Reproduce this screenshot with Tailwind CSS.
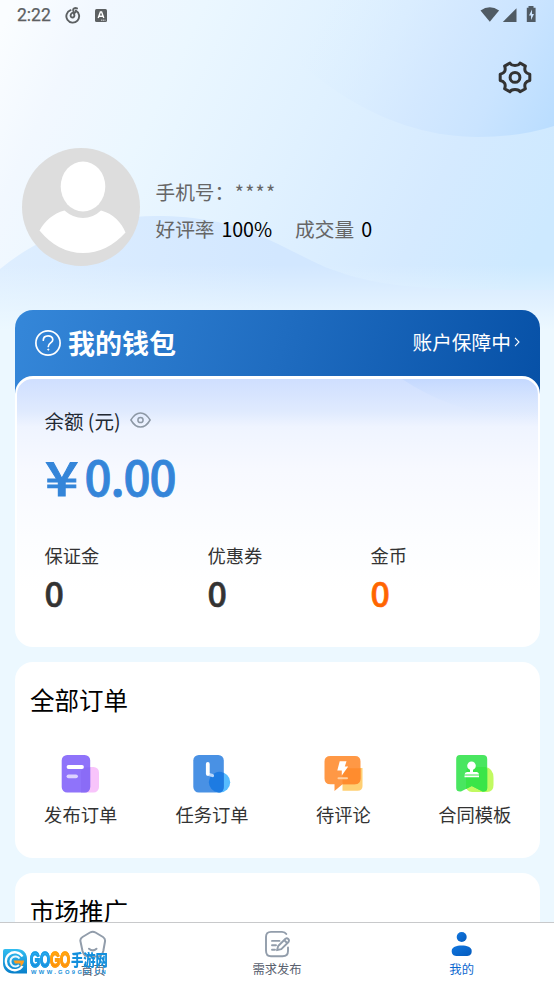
<!DOCTYPE html>
<html lang="zh-CN">
<head>
<meta charset="utf-8">
<meta name="viewport" content="width=device-width, initial-scale=1">
<title>我的</title>
<script src="https://cdn.jsdelivr.net/npm/@tailwindcss/browser@4"></script>
</head>
<body class="bg-[#ecf7ff]">
<div class="relative flex h-[984px] w-[554px] flex-col overflow-hidden bg-[#ecf8ff] font-['Noto_Sans_CJK_SC',sans-serif] text-black">
  <!-- header backdrop -->
  <svg class="absolute left-0 top-0" width="554" height="330" viewBox="0 0 554 330">
    <defs>
      <linearGradient id="sky" gradientUnits="userSpaceOnUse" x1="0" y1="30" x2="520" y2="280">
        <stop offset="0" stop-color="#fafdff"/><stop offset=".13" stop-color="#f2f8ff"/><stop offset=".3" stop-color="#ebf7ff"/><stop offset=".55" stop-color="#e0f1ff"/><stop offset=".8" stop-color="#d5eaff"/><stop offset="1" stop-color="#cde9ff"/>
      </linearGradient>
      <linearGradient id="arc" gradientUnits="userSpaceOnUse" x1="320" y1="20" x2="560" y2="140">
        <stop offset="0" stop-color="#def0ff" stop-opacity="0"/><stop offset=".45" stop-color="#d3e8ff" stop-opacity=".9"/><stop offset=".7" stop-color="#cae4ff"/><stop offset="1" stop-color="#b7dcff"/>
      </linearGradient>
      <linearGradient id="wave" x1="0" y1="0" x2="1" y2="0">
        <stop offset="0" stop-color="#deeeff"/><stop offset=".5" stop-color="#d2e7ff"/><stop offset="1" stop-color="#d2e7ff"/>
      </linearGradient>
      <linearGradient id="fade" x1="0" y1="0" x2="0" y2="1">
        <stop offset="0" stop-color="#ecf8ff" stop-opacity="0"/><stop offset="1" stop-color="#ecf8ff"/>
      </linearGradient>
    </defs>
    <rect width="554" height="330" fill="url(#sky)"/>
    <path d="M240 0C300 75 380 137 478 137Q520 137 554 126V0Z" fill="url(#arc)"/>
    <path d="M0 269C40 236 90 217 155 216C240 216 270 242 325 267C380 288 420 290 554 290V330H0Z" fill="url(#wave)"/>
    <rect y="265" width="554" height="65" fill="url(#fade)"/>
  </svg>

  <!-- status bar -->
  <div class="relative flex h-[30px] shrink-0 items-center pl-[17px] pr-[17px] text-[#5c6062]">
    <span class="w-[48px] font-[Roboto,sans-serif] text-[17.5px] leading-[30px] [-webkit-text-stroke:.25px_#5c6062]">2:22</span>
    <svg width="16" height="17" viewBox="0 0 16 17" fill="none" stroke="currentColor" stroke-width="1.9" stroke-linecap="round"><path d="M5.6 3.2A6.4 6.4 0 1 0 10.800 3.600M12 1.400C9.800 .4 7.900 1.500 8.200 3.200L9.400 8.500A1.900 1.900 0 1 1 5.600 8.700C5.500 6.300 8 5 10.300 5.500"/></svg>
    <svg class="ml-[13.500px]" width="12" height="13" viewBox="0 0 12 13"><rect width="12" height="13" rx="1.5" fill="currentColor"/><path d="M3.200 9L5.400 3H6.600L8.800 9M4.200 7.200H7.800" fill="none" stroke="#fff" stroke-width="1.400"/><path d="M6 11.200H10.500" stroke="#fff" stroke-width=".8" stroke-dasharray="1.500 .5"/></svg>
    <div class="flex-1"></div>
    <svg width="57" height="18" viewBox="0 0 57 18" fill="#505b64"><path d="M.5 4.500Q9.800-2 19.100 4.500L9.800 15.800Z"/><path d="M22.800 16H36.500V2.200Z"/><path fill-rule="evenodd" d="M48.500 0H53.500V1.800H55.600V16H46.800V1.800H48.500ZM52 3.500L49 9.500H51V14L54 8H52Z"/></svg>
  </div>

  <div class="relative flex h-[118px] shrink-0 justify-end pr-[22.500px] pt-[30px]">
    <svg width="34" height="35" viewBox="0 0 34 35" fill="none" stroke="#333" stroke-width="3" stroke-linejoin="round"><path d="M11.900 3Q13 5.400 17 5.400T22.100 3L27.400 6.100C25.800 10.500 27.500 13.500 31.800 14.200V20.600C27.500 21.300 25.800 24.300 27.400 28.700L22.100 31.800Q21 29.400 17 29.400T11.900 31.800L6.600 28.700C8.200 24.300 6.500 21.300 2.200 20.600V14.200C6.500 13.500 8.200 10.500 6.600 6.100Z"/><circle cx="17" cy="17.400" r="4.900"/></svg>
  </div>

  <!-- profile -->
  <div class="relative flex h-[162px] shrink-0 pl-[22px]">
    <svg width="118" height="118" viewBox="0 0 118 118"><circle cx="59" cy="59" r="59" fill="#ddd"/><ellipse cx="61" cy="38.500" rx="22.300" ry="25" fill="#fff"/><path d="M42.500 62.500Q51 70 61 70Q71 70 79 62.500C91 65.500 100 75 103.500 84.500Q85 105 61 105Q36 105 17.500 82.500C23 73 31 65.500 42.500 62.500Z" fill="#fff"/></svg>
    <div class="ml-[15.500px] flex flex-col pt-[25px] text-[19.700px] leading-[37px] text-[#666]">
      <div>手机号：<span class="ml-[.5px] tracking-[1.200px]">****</span></div>
      <div class="flex"><span>好评率</span><span class="ml-[7px] w-[73.500px] tracking-[-0.150px] text-black">100%</span><span>成交量</span><span class="ml-[7px] text-black">0</span></div>
    </div>
  </div>

  <!-- wallet -->
  <section class="relative mx-[15px] h-[337px] w-[525.400px] shrink-0">
    <div class="flex h-[110px] justify-between rounded-t-[18px] bg-[linear-gradient(105deg,#3587d9,#1f6cc0_50%,#0650a6)] pl-5 pr-[20.500px] text-white">
      <div class="flex h-[65px] items-center gap-[7px]">
        <svg width="26" height="26" viewBox="0 0 26 26" fill="none" stroke="#fff" stroke-width="1.700"><circle cx="13" cy="13" r="12.100"/><path d="M8.300 10.200C8.300 4.500 17.800 4.500 17.800 9.700C17.800 12.800 13.300 13 13.300 16.400" stroke-linecap="round"/><circle cx="13.300" cy="19.600" r=".6" fill="#fff" stroke-width="1"/></svg>
        <h2 class="text-[27px] font-bold leading-[40px]">我的钱包</h2>
      </div>
      <div class="flex h-[64px] items-center gap-[3px] text-[19.700px]"><span>账户保障中</span><svg width="6" height="10" viewBox="0 0 6 10" fill="none" stroke="#fff" stroke-width="1.100"><path d="M1 .8L5 5L1 9.200"/></svg></div>
    </div>
    <div class="relative -mt-[44px] h-[271px] overflow-hidden rounded-[18px] border-2 border-t-3 border-white bg-[linear-gradient(180deg,#cfdfff,#dfeafe_12%,#eff4ff_18%,#f7f9ff_34%,#fcfdff_60%,#fff_80%)] pl-[27.500px]">
      <svg class="absolute left-0 top-0" width="520" height="45" viewBox="0 0 520 45"><defs><linearGradient id="glow" x1="0" y1="0" x2="0" y2="1"><stop stop-color="#b8d2ff" stop-opacity=".5"/><stop offset="1" stop-color="#e5efff" stop-opacity="0"/></linearGradient></defs><path d="M385 0Q440 37 520 43V0Z" fill="url(#glow)"/></svg>
      <div class="relative flex h-[83px] items-center text-[19.500px] text-[#222933]"><span>余额 (元)</span><svg class="-mt-px ml-[9.500px]" width="21" height="16" viewBox="0 0 21 16" fill="none" stroke="#8d98a5" stroke-width="1.500"><path d="M.9 8Q5 .9 10.500 .9T20.100 8Q16 15.100 10.500 15.100T.9 8Z"/><circle cx="10.500" cy="8" r="2.600"/></svg></div>
      <div class="relative flex h-[30px] items-center text-[47.500px] font-medium leading-none text-[#3485d9] [-webkit-text-stroke:.9px_#3485d9]"><span class="-mt-[3px] w-[40px]"><span class="inline-block origin-left scale-x-[1.240]">¥</span></span><span class="-mt-[3px] tracking-[-1.100px]">0.00</span></div>
      <div class="relative mt-[45px] grid grid-cols-[163px_163px_1fr] text-[18.300px] leading-[36px] text-[#333]">
        <div><div>保证金</div><div class="text-[34px] font-medium leading-[40px] [-webkit-text-stroke:.6px_#333]">0</div></div>
        <div><div>优惠券</div><div class="text-[34px] font-medium leading-[40px] [-webkit-text-stroke:.6px_#333]">0</div></div>
        <div><div>金币</div><div class="text-[34px] font-medium leading-[40px] text-[#ff6500] [-webkit-text-stroke:.6px_#ff6500]">0</div></div>
      </div>
    </div>
  </section>

  <!-- orders -->
  <section class="relative mx-[15px] mt-[15px] h-[196px] w-[525.400px] shrink-0 rounded-[18px] bg-white pt-[19px]">
    <h2 class="pl-[15px] text-[24.500px] leading-[38px]">全部订单</h2>
    <div class="mt-[34px] grid grid-cols-4 text-center text-[18.300px] leading-[39px] text-[#333]">
      <div class="flex flex-col items-center">
        <svg class="-translate-x-[.5px]" width="42" height="42" viewBox="0 0 42 42"><rect x="22" y="14" width="17.500" height="25.500" rx="5.500" fill="#f8c4fb"/><rect x="2.200" y="2" width="28.500" height="37.500" rx="5.500" fill="#8f73fa"/><path d="M21.500 39.500V20Q21.500 14.500 27 14.500H30.700V34Q30.700 39.500 25 39.500Z" fill="#8768f5" opacity=".65"/><path d="M9 14H22.500" stroke="#fff" stroke-width="3.800" stroke-linecap="round"/><path d="M9 23.300H16.500" stroke="#ddd3ff" stroke-width="3.800" stroke-linecap="round"/></svg>
        <span>发布订单</span>
      </div>
      <div class="flex flex-col items-center">
        <svg width="42" height="42" viewBox="0 0 42 42"><circle cx="29" cy="29.300" r="10.200" fill="#57bcff"/><rect x="2.300" y="2" width="30.500" height="37.500" rx="5.500" fill="#4991e4"/><path d="M32.800 19.900A10.200 10.200 0 0 0 23.700 38.500L28 39.500Q32.800 39.500 32.800 33.500Z" fill="#1d7be2"/><path d="M17 21.300L21.500 22.500" stroke="#b7d5fa" stroke-width="3.200" stroke-linecap="round"/><path d="M16.800 11V20.800" stroke="#fff" stroke-width="3.800" stroke-linecap="round"/></svg>
        <span>任务订单</span>
      </div>
      <div class="flex flex-col items-center">
        <svg class="translate-x-[.5px]" width="42" height="42" viewBox="0 0 42 42"><path d="M20 15H40V33Q40 37.800 35 37.800H20Z" fill="#ffcf73"/><path d="M8 3H32.500Q38 3 38 8.500V25.500Q38 31.300 32 31.300H20L12 38V31.300H8Q2 31.300 2 25.500V8.500Q2 3 8 3Z" fill="#ff9845"/><path d="M20 15.200H38V25.500Q38 31.300 32 31.300H20Z" fill="#ff8c2e"/><path d="M17.200 8.300H24L22.300 13.600H25.700L19.300 22.500V17.600H14.800Z" fill="#fff"/><path d="M16 25.300H24.500" stroke="#ffd0a0" stroke-width="2" stroke-linecap="round"/></svg>
        <span>待评论</span>
      </div>
      <div class="flex flex-col items-center">
        <svg width="42" height="42" viewBox="0 0 42 42"><path d="M17 14H31Q39.500 15 39.500 25V32Q39.500 39 33 39H18Q12 39 12 32V20Q12 14 17 14Z" fill="#c1fa61"/><path d="M6 2H29Q33.200 2 33.200 6V35Q33.200 39 28.500 38.500L17.800 33L7 38.500Q2.200 39 2.200 35V6Q2.200 2 6 2Z" fill="#49e660"/><path d="M12 35.900V20Q12 14 17 14H32L33.200 16V35Q33.200 39 28.500 38.500L17.800 33Z" fill="#3ae548"/><circle cx="17.500" cy="12.700" r="4.300" fill="#fff"/><path d="M16 16H19V19H23Q25 19.500 25 21.500H10.500Q11 19 13 19H16ZM10.500 22.500H25V24.200H10.500Z" fill="#fff"/></svg>
        <span>合同模板</span>
      </div>
    </div>
  </section>

  <section class="relative mx-[15px] mt-[15px] h-[120px] w-[525.400px] shrink-0 rounded-t-[18px] bg-white pl-[15px] pt-[19px]">
    <h2 class="text-[24.500px] leading-[38px]">市场推广</h2>
  </section>

  <nav class="absolute bottom-0 left-0 grid h-[62px] w-full grid-cols-3 border-t border-[#c8c9cb] bg-white pb-[5px] text-[12.300px] leading-[20px] text-[#59616f]">
    <div class="flex flex-col items-center pt-[7px]">
      <svg class="translate-x-[.5px]" width="28" height="28" viewBox="0 0 28 28" fill="none" stroke="#929dab" stroke-width="2" stroke-linecap="round"><path d="M11.500 2.500Q14.300.8 17 2.500L24.500 7Q27 8.600 26.500 11.500L24.800 21Q23.500 26.500 19 26.500H10Q5.500 26.500 4 21L2 11.500Q1.300 8.600 4 7Z"/><path d="M10.500 18.700Q14.300 22 18 18.700"/></svg>
      <span class="mt-[2px] translate-x-[1px]">首页</span>
    </div>
    <div class="flex flex-col items-center pt-[7px]">
      <svg class="translate-x-[1px]" width="28" height="28" viewBox="0 0 28 28" fill="none" stroke="#929dab" stroke-width="1.900" stroke-linecap="round" stroke-linejoin="round"><path d="M22.300 4Q21 1.900 18 1.900H7Q2 1.900 2 7V20.500Q2 26.300 7 26.300H18.500Q24 26.300 24 21V17.500"/><path d="M8 10.900H15.500M8 15.300H12M8 19.700H11"/><path d="M13 20.200L14.200 16L21.500 8.800Q23 7.800 24.300 9T24.500 12L17.300 19.100ZM20.300 10.200L23.200 13"/></svg>
      <span class="mt-[1px]">需求发布</span>
    </div>
    <div class="flex flex-col items-center pt-[7px] text-[#0c68cf]">
      <svg class="-translate-x-[.5px]" width="28" height="28" viewBox="0 0 28 28"><defs><linearGradient id="me" x1="0" y1="0" x2="1" y2="1"><stop stop-color="#1176df"/><stop offset="1" stop-color="#045bbd"/></linearGradient></defs><circle cx="14.200" cy="7" r="5" fill="url(#me)"/><path d="M4.200 21C4.200 17 9 15.500 14.200 15.500S24.200 17 24.200 21C24.200 25 22 26 18.500 26H9.900C6.500 26 4.200 25 4.200 21Z" fill="url(#me)"/></svg>
      <span class="mt-[1px]">我的</span>
    </div>
  </nav>

  <!-- site badge -->
  <div class="absolute left-[2px] top-[948px] flex h-[28px] w-[108px]">
    <svg class="shrink-0" width="26" height="26" viewBox="0 0 26 26"><defs><linearGradient id="gb" x1="0" y1="0" x2="0" y2="1"><stop stop-color="#32bdf0"/><stop offset="1" stop-color="#087fca"/></linearGradient></defs><path d="M3 1H15C21 1 25 5 25 11V25.500H11C5 25.500 1 21 1 15V3Q1 1 3 1Z" fill="url(#gb)"/><path d="M20.500 8.500A9 9 0 1 0 20.500 18" fill="none" stroke="#fff" stroke-width="2.300"/><path d="M17.500 10.500A5 5 0 1 0 17 17" fill="none" stroke="#e9f7fc" stroke-width="2"/><path d="M11.500 12.500H22Q22 16 18.500 18.500V15.500H13Z" fill="#ff9d20"/></svg>
    <div class="relative ml-[2px] w-[80px]">
      <div class="flex h-[25px] items-center whitespace-nowrap font-['Liberation_Sans',sans-serif] font-bold leading-[25px]">
        <span class="w-[41px] shrink-0"><span class="flex origin-left scale-x-[.6] text-[21.500px]"><span class="bg-linear-to-b from-[#38b9f5] to-[#0878cf] bg-clip-text text-transparent [-webkit-text-stroke:1.500px_#1b9de6]">GO</span><span class="bg-linear-to-b from-[#ffb817] to-[#ff7900] bg-clip-text text-transparent [-webkit-text-stroke:1.500px_#ff9c10]">GO</span></span></span>
        <span class="-mt-[1px] font-['Noto_Sans_CJK_SC',sans-serif] text-[12.300px] font-black text-[#138fdc]"><span class="inline-block origin-center scale-y-[1.250]">手游网</span></span>
      </div>
      <div class="absolute left-[1px] top-[21px] whitespace-nowrap font-['Liberation_Sans',sans-serif] text-[5.800px] font-bold leading-[6px] tracking-[2.350px] text-[#188fda]">WWW.GO9GO.CN</div>
    </div>
  </div>
</div>
</body>
</html>
